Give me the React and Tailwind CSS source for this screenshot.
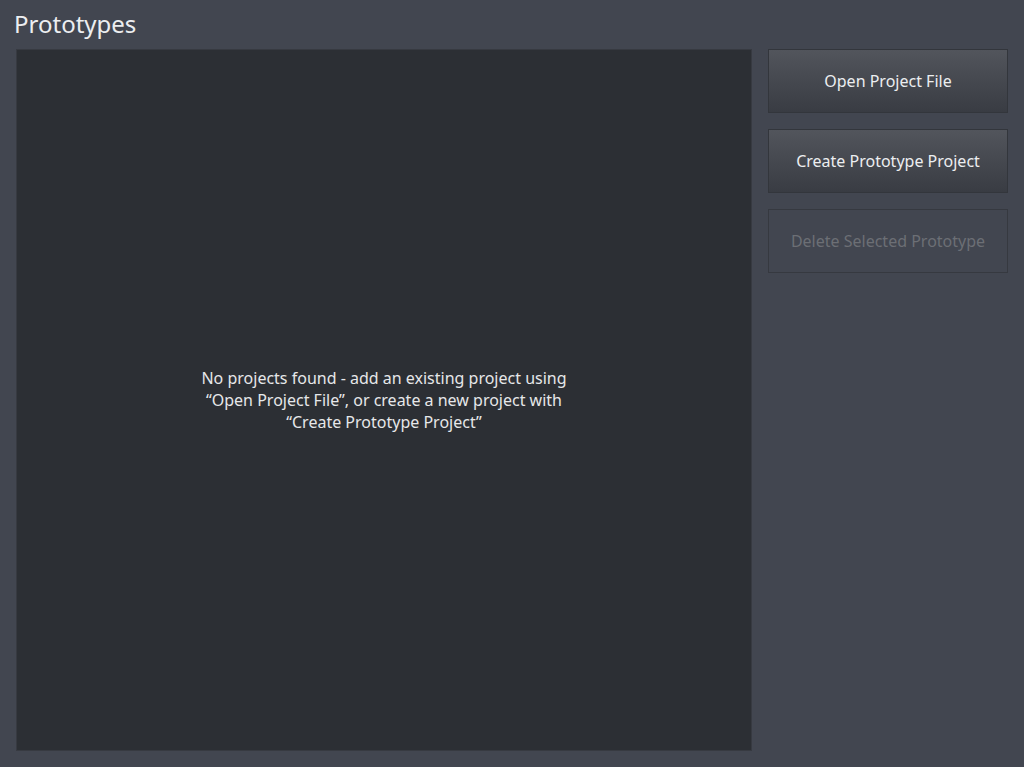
export default function App() {
  const font = { fontFamily: '"Noto Sans", "Open Sans", sans-serif' };
  return (
    <div
      className="flex h-[767px] w-[1024px] flex-col bg-[#424650] text-[#e6e7e9]"
      style={font}
    >
      <div className="h-[49px] pl-[14px] pt-[6px]">
        <h1 className="text-[24px] leading-[36px] text-[#eceef0]">Prototypes</h1>
      </div>
      <div className="flex flex-1 gap-4 pb-4 pl-4 pr-4">
        <div className="flex w-[736px] items-center justify-center border border-[#373a41] bg-[#2c2f34]">
          <p className="text-center text-[16px] leading-[22px] text-[#e6e7e9]">
            No projects found - add an existing project using
            <br />
            “Open Project File”, or create a new project with
            <br />
            “Create Prototype Project”
          </p>
        </div>
        <div className="flex w-[240px] flex-col gap-4">
          <button className="h-[64px] border border-[#33363c] bg-gradient-to-b from-[#52555c] to-[#393c43] text-[16px] text-[#eceef0]">
            Open Project File
          </button>
          <button className="h-[64px] border border-[#33363c] bg-gradient-to-b from-[#52555c] to-[#393c43] text-[16px] text-[#eceef0]">
            Create Prototype Project
          </button>
          <button
            disabled
            className="h-[64px] border border-[#363940] bg-transparent text-[16px] text-[#6c6f75]"
          >
            Delete Selected Prototype
          </button>
        </div>
      </div>
    </div>
  );
}
